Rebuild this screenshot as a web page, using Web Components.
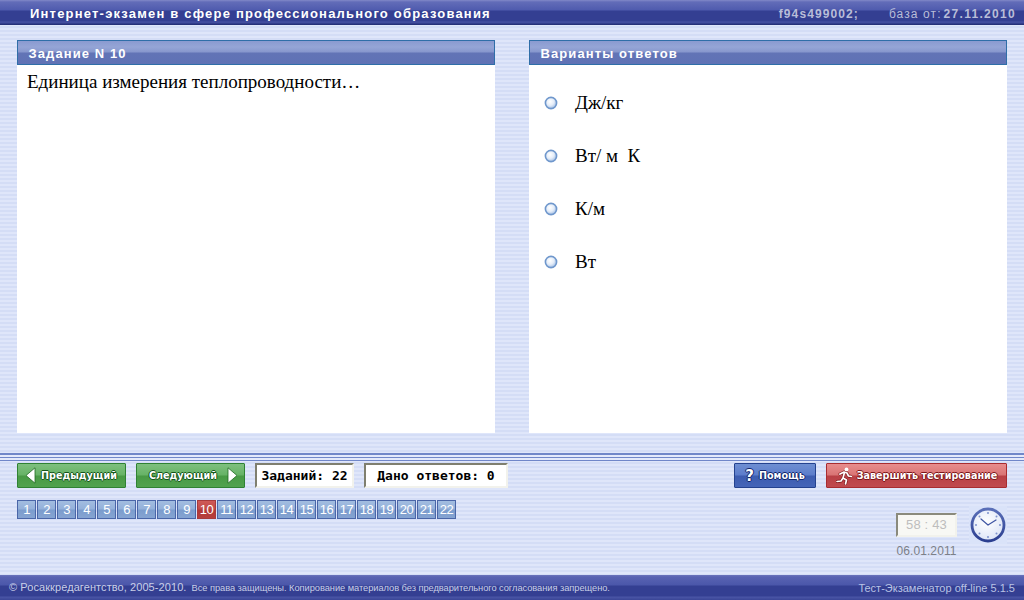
<!DOCTYPE html>
<html lang="ru">
<head>
<meta charset="utf-8">
<title>Интернет-экзамен</title>
<style>
  html, body { margin: 0; height: 100%; overflow: hidden; }
  body { font-family: "Liberation Sans", Arial, sans-serif; }
</style>
</head>
<body>
<exam-app>
  <exam-header slot="header"></exam-header>
  <exam-panel slot="left" title="Задание N 10">
    <p style="margin:0;font:19px/20px 'Liberation Serif',serif;color:#000">Единица измерения теплопроводности…</p>
  </exam-panel>
  <exam-panel slot="right" title="Варианты ответов">
    <div style="padding:4px 0 0 5px">
      <answer-option>Дж/кг</answer-option>
      <answer-option>Вт/&nbsp;м&nbsp; К</answer-option>
      <answer-option>К/м</answer-option>
      <answer-option>Вт</answer-option>
    </div>
  </exam-panel>
  <exam-toolbar slot="toolbar"></exam-toolbar>
  <exam-footer slot="footer"></exam-footer>
</exam-app>

<script>
const stripes = "repeating-linear-gradient(180deg,#dfe6fa 0,#dfe6fa 2px,#d4ddf6 2px,#d4ddf6 4px)";
const barBg = "linear-gradient(180deg,#8189c8 0,#626cb8 2px,#4f5bae 10px,#343f92 11px,#343f92 21px,#4a55a6 22px,#3a4596 23px,#1f2a6e 25px)";

class ExamApp extends HTMLElement {
  constructor() {
    super();
    this.attachShadow({ mode: "open" });
    this.shadowRoot.innerHTML = `
      <style>
        :host { display: grid; grid-template-rows: 25px 1fr auto 25px; width: 1024px; height: 600px; background: ${stripes}; }
        .main { display: grid; grid-template-columns: 478px 478px; column-gap: 34px; padding: 15px 17px 20px; min-height: 0; }
      </style>
      <slot name="header"></slot>
      <div class="main">
        <slot name="left"></slot>
        <slot name="right"></slot>
      </div>
      <slot name="toolbar"></slot>
      <slot name="footer"></slot>
    `;
  }
}

class ExamHeader extends HTMLElement {
  constructor() {
    super();
    this.attachShadow({ mode: "open" });
    this.shadowRoot.innerHTML = `
      <style>
        :host { display: flex; align-items: center; justify-content: space-between; height: 25px; box-sizing: border-box; padding: 3px 8px 0 30px; background: ${barBg}; color: #fff; }
        .title { font: bold 13px/16px "Liberation Sans", sans-serif; letter-spacing: 1.2px; white-space: nowrap; }
        .meta { display: flex; align-items: baseline; color: #b9bdd8; font: 12px/16px "Liberation Sans", sans-serif; letter-spacing: 1.1px; white-space: nowrap; }
        b { font-weight: bold; font-size: 12px; }
        .id { margin-right: 30px; }
        .date { margin-left: 2px; letter-spacing: 1.3px; }
      </style>
      <div class="title">Интернет-экзамен в сфере профессионального образования</div>
      <div class="meta"><b class="id">f94s499002;</b><span>база от:</span><b class="date">27.11.2010</b></div>
    `;
  }
}

class ExamPanel extends HTMLElement {
  constructor() {
    super();
    this.attachShadow({ mode: "open" });
    this.shadowRoot.innerHTML = `
      <style>
        :host { display: flex; flex-direction: column; min-height: 0; }
        .head { height: 25px; box-sizing: border-box; border: 1px solid #2f6ea8; padding: 3px 0 0 10.5px; background: linear-gradient(180deg,#8a9ad0 0,#95a5d6 6px,#8797cd 11px,#6274b6 12px,#5f72b5 23px); color: #fff; font: bold 13px/20px "Liberation Sans", sans-serif; letter-spacing: 1.1px; }
        .body { flex: 1; background: #fff; padding: 7px 10px; min-height: 0; }
      </style>
      <div class="head"></div>
      <div class="body"><slot></slot></div>
    `;
    this.shadowRoot.querySelector(".head").textContent = this.getAttribute("title");
    this.removeAttribute("title");
  }
}

class AnswerOption extends HTMLElement {
  constructor() {
    super();
    this.attachShadow({ mode: "open" });
    this.shadowRoot.innerHTML = `
      <style>
        :host { display: flex; align-items: center; height: 53px; gap: 17px; font: 19px/20px "Liberation Serif", serif; color: #000; }
        svg { flex: none; }
      </style>
      <svg width="14" height="14" viewBox="0 0 14 14">
        <defs><radialGradient id="r" cx=".42" cy=".38" r=".6"><stop offset="0" stop-color="#fff"/><stop offset=".55" stop-color="#e6eef9"/><stop offset="1" stop-color="#a9c3e6"/></radialGradient></defs>
        <circle cx="7" cy="7" r="5.6" fill="url(#r)" stroke="#6f97cc" stroke-width="1.6"/>
      </svg>
      <span><slot></slot></span>
    `;
  }
}

class GlossButton extends HTMLElement {
  constructor() {
    super();
    this.attachShadow({ mode: "open" });
    const tone = this.getAttribute("tone") || "green";
    const tones = {
      green: ["#2f8233", "#7fc07f", "#66b266", "#489a45", "#51a24e", "#14551a"],
      blue: ["#24428f", "#6f8fd2", "#5b7ccb", "#3c5cb0", "#4565b8", "#10246a"],
      red: ["#a82c30", "#e88d8d", "#d97474", "#b94045", "#c04a4e", "#7c1518"]
    };
    const t = tones[tone];
    this.shadowRoot.innerHTML = `
      <style>
        :host { display: inline-flex; align-items: center; justify-content: center; box-sizing: border-box; height: 25px; gap: 5px; border: 1px solid ${t[0]}; border-radius: 1px; color: #fff; font: bold 9.6px/14px "DejaVu Sans", sans-serif; white-space: nowrap; background: linear-gradient(180deg,${t[1]} 0,${t[2]} 11px,${t[3]} 12px,${t[4]} 100%); text-shadow: 1px 0 0 ${t[5]}, -1px 0 0 ${t[5]}, 0 1px 0 ${t[5]}, 0 -1px 0 ${t[5]}; }
      </style>
      <slot></slot>
    `;
  }
}

class PageStrip extends HTMLElement {
  constructor() {
    super();
    this.attachShadow({ mode: "open" });
    const total = +this.getAttribute("total");
    const current = +this.getAttribute("current");
    let cells = "";
    for (let i = 1; i <= total; i++) cells += `<span class="${i === current ? "cur" : ""}">${i}</span>`;
    this.shadowRoot.innerHTML = `
      <style>
        :host { display: flex; gap: 1px; }
        span { width: 19px; height: 19px; box-sizing: border-box; border: 1px solid #4a66a8; background: linear-gradient(180deg,#a2bde0 0,#94b1da 8px,#7b9ccd 9px,#86a4d2 100%); color: #fff; font: 13px/17px "Liberation Sans", sans-serif; text-align: center; letter-spacing: -.6px; }
        .cur { border-color: #a83a3c; background: linear-gradient(180deg,#cf5a58 0,#c24a48 8px,#b23836 9px,#b63f3d 100%); }
      </style>
      ${cells}
    `;
  }
}

class CountBox extends HTMLElement {
  constructor() {
    super();
    this.attachShadow({ mode: "open" });
    this.shadowRoot.innerHTML = `
      <style>
        :host { display: flex; align-items: center; justify-content: center; box-sizing: border-box; height: 25px; background: #fff; border: 2px solid; border-color: #7f7f6f #f2f2ec #f2f2ec #7f7f6f; font: bold 13px/16px "DejaVu Sans Mono", monospace; color: #000; white-space: nowrap; }
      </style>
      <slot></slot>
    `;
  }
}

class ExamToolbar extends HTMLElement {
  constructor() {
    super();
    this.attachShadow({ mode: "open" });
    this.shadowRoot.innerHTML = `
      <style>
        :host { height: 122px; box-sizing: border-box; padding: 10px 17px 0; display: flex; flex-direction: column; background: linear-gradient(180deg,#7087c9 0 2px,#e3e9fb 2px 4px,#7087c9 4px 5px,#e3e9fb 5px 7px,#7087c9 7px 8px,transparent 8px); }
        .row { display: flex; align-items: center; gap: 10px; }
        .spacer { flex: 1; }
        .lower { display: flex; justify-content: space-between; padding-top: 12px; }
        .clock { display: flex; gap: 12px; align-items: flex-start; margin-top: 6px; }
        .time { display: flex; flex-direction: column; align-items: center; gap: 6px; padding-top: 7px; }
        .timer { width: 61px; height: 24px; box-sizing: border-box; background: #f8f8f4; border: 2px solid; border-color: #8a8a7c #f2f2ec #f2f2ec #8a8a7c; color: #bdbdbd; font: 13px/20px "Liberation Sans", sans-serif; letter-spacing: .15px; text-align: center; white-space: pre; }
        .date { color: #7c8088; font: 12px/16px "Liberation Sans", sans-serif; letter-spacing: .1px; }
        gloss-button.prev, gloss-button.next { width: 109px; }
        gloss-button.prev { justify-content: flex-start; padding-left: 7px; }
        gloss-button.next { justify-content: flex-end; padding-right: 6px; gap: 10px; }
        gloss-button.help { width: 82px; }
        gloss-button.finish { width: 181px; }
        count-box.a { width: 99px; }
        count-box.b { width: 144px; }
      </style>
      <div class="row">
        <gloss-button class="prev" tone="green">
          <svg width="11" height="17" viewBox="0 0 11 17"><path d="M10 .8v15.4L1 8.5z" fill="#fff" stroke="#1f6a22" stroke-width=".8"/></svg>Предыдущий
        </gloss-button>
        <gloss-button class="next" tone="green">
          Следующий<svg width="11" height="17" viewBox="0 0 11 17"><path d="M1 .8v15.4l9-7.7z" fill="#fff" stroke="#1f6a22" stroke-width=".8"/></svg>
        </gloss-button>
        <count-box class="a">Заданий: 22</count-box>
        <count-box class="b">Дано ответов: 0</count-box>
        <span class="spacer"></span>
        <gloss-button class="help" tone="blue"><span style="font:bold 15px/14px 'DejaVu Sans',sans-serif">?</span>Помощь</gloss-button>
        <gloss-button class="finish" tone="red">
          <svg width="16" height="18" viewBox="0 0 16 18"><g fill="none" stroke-linecap="round" stroke-linejoin="round"><path d="M4 7l4-2 3 1 1.5 3 3 .5M8.5 5.5L7 11l3.5 2-1 4M7 11l-2 3-4 .5" stroke="#7c1518" stroke-width="3"/><path d="M4 7l4-2 3 1 1.5 3 3 .5M8.5 5.5L7 11l3.5 2-1 4M7 11l-2 3-4 .5" stroke="#fff" stroke-width="1.7"/></g><circle cx="10.5" cy="2.4" r="1.9" fill="#fff"/></svg>Завершить тестирование
        </gloss-button>
      </div>
      <div class="lower">
        <page-strip total="22" current="10"></page-strip>
        <div class="clock">
          <div class="time">
            <div class="timer">58 : 43</div>
            <div class="date">06.01.2011</div>
          </div>
          <svg width="38" height="38" viewBox="0 0 38 38">
            <defs>
              <radialGradient id="face" cx=".45" cy=".4" r=".65"><stop offset="0" stop-color="#fff"/><stop offset="1" stop-color="#dbe3f6"/></radialGradient>
              <linearGradient id="ring" x1="0" y1="0" x2="0" y2="1"><stop offset="0" stop-color="#5a6fb8"/><stop offset="1" stop-color="#2c3f90"/></linearGradient>
            </defs>
            <rect width="38" height="38" fill="#dae3f9"/>
            <circle cx="19" cy="19" r="16" fill="url(#face)" stroke="url(#ring)" stroke-width="2.8"/>
            <g fill="#7f93cc"><circle cx="19" cy="7" r="1"/><circle cx="19" cy="31" r="1"/><circle cx="7" cy="19" r="1"/><circle cx="31" cy="19" r="1"/><circle cx="10.5" cy="10.5" r="1"/><circle cx="27.5" cy="27.5" r="1"/><circle cx="27.5" cy="10.5" r="1"/><circle cx="10.5" cy="27.5" r="1"/></g>
            <path d="M19 19L27 14M19 19L12 13" stroke="#3f55a3" stroke-width="1.2" stroke-linecap="round"/>
          </svg>
        </div>
      </div>
    `;
  }
}

class ExamFooter extends HTMLElement {
  constructor() {
    super();
    this.attachShadow({ mode: "open" });
    this.shadowRoot.innerHTML = `
      <style>
        :host { display: flex; align-items: center; justify-content: space-between; height: 25px; box-sizing: border-box; padding: 0 9px; background: linear-gradient(180deg,#6a74bc 0,#5862b2 2px,#4b57aa 10px,#343f92 11px,#343f92 21px,#4a55a6 22px,#3a4596 25px); color: #c9cfe8; white-space: nowrap; }
        .left { display: flex; align-items: baseline; gap: 5px; }
        .copy { font: 11px/14px "Liberation Sans", sans-serif; letter-spacing: .08px; }
        .rights { font: 9.3px/14px "Liberation Sans", sans-serif; letter-spacing: -.05px; }
        .ver { font: 11px/14px "Liberation Sans", sans-serif; color: #b9c3e5; }
      </style>
      <div class="left"><span class="copy">© Росаккредагентство, 2005-2010.</span><span class="rights">Все права защищены. Копирование материалов без предварительного согласования запрещено.</span></div>
      <div class="ver">Тест-Экзаменатор off-line 5.1.5</div>
    `;
  }
}

customElements.define("exam-app", ExamApp);
customElements.define("exam-header", ExamHeader);
customElements.define("exam-panel", ExamPanel);
customElements.define("answer-option", AnswerOption);
customElements.define("gloss-button", GlossButton);
customElements.define("page-strip", PageStrip);
customElements.define("count-box", CountBox);
customElements.define("exam-toolbar", ExamToolbar);
customElements.define("exam-footer", ExamFooter);
</script>
</body>
</html>
